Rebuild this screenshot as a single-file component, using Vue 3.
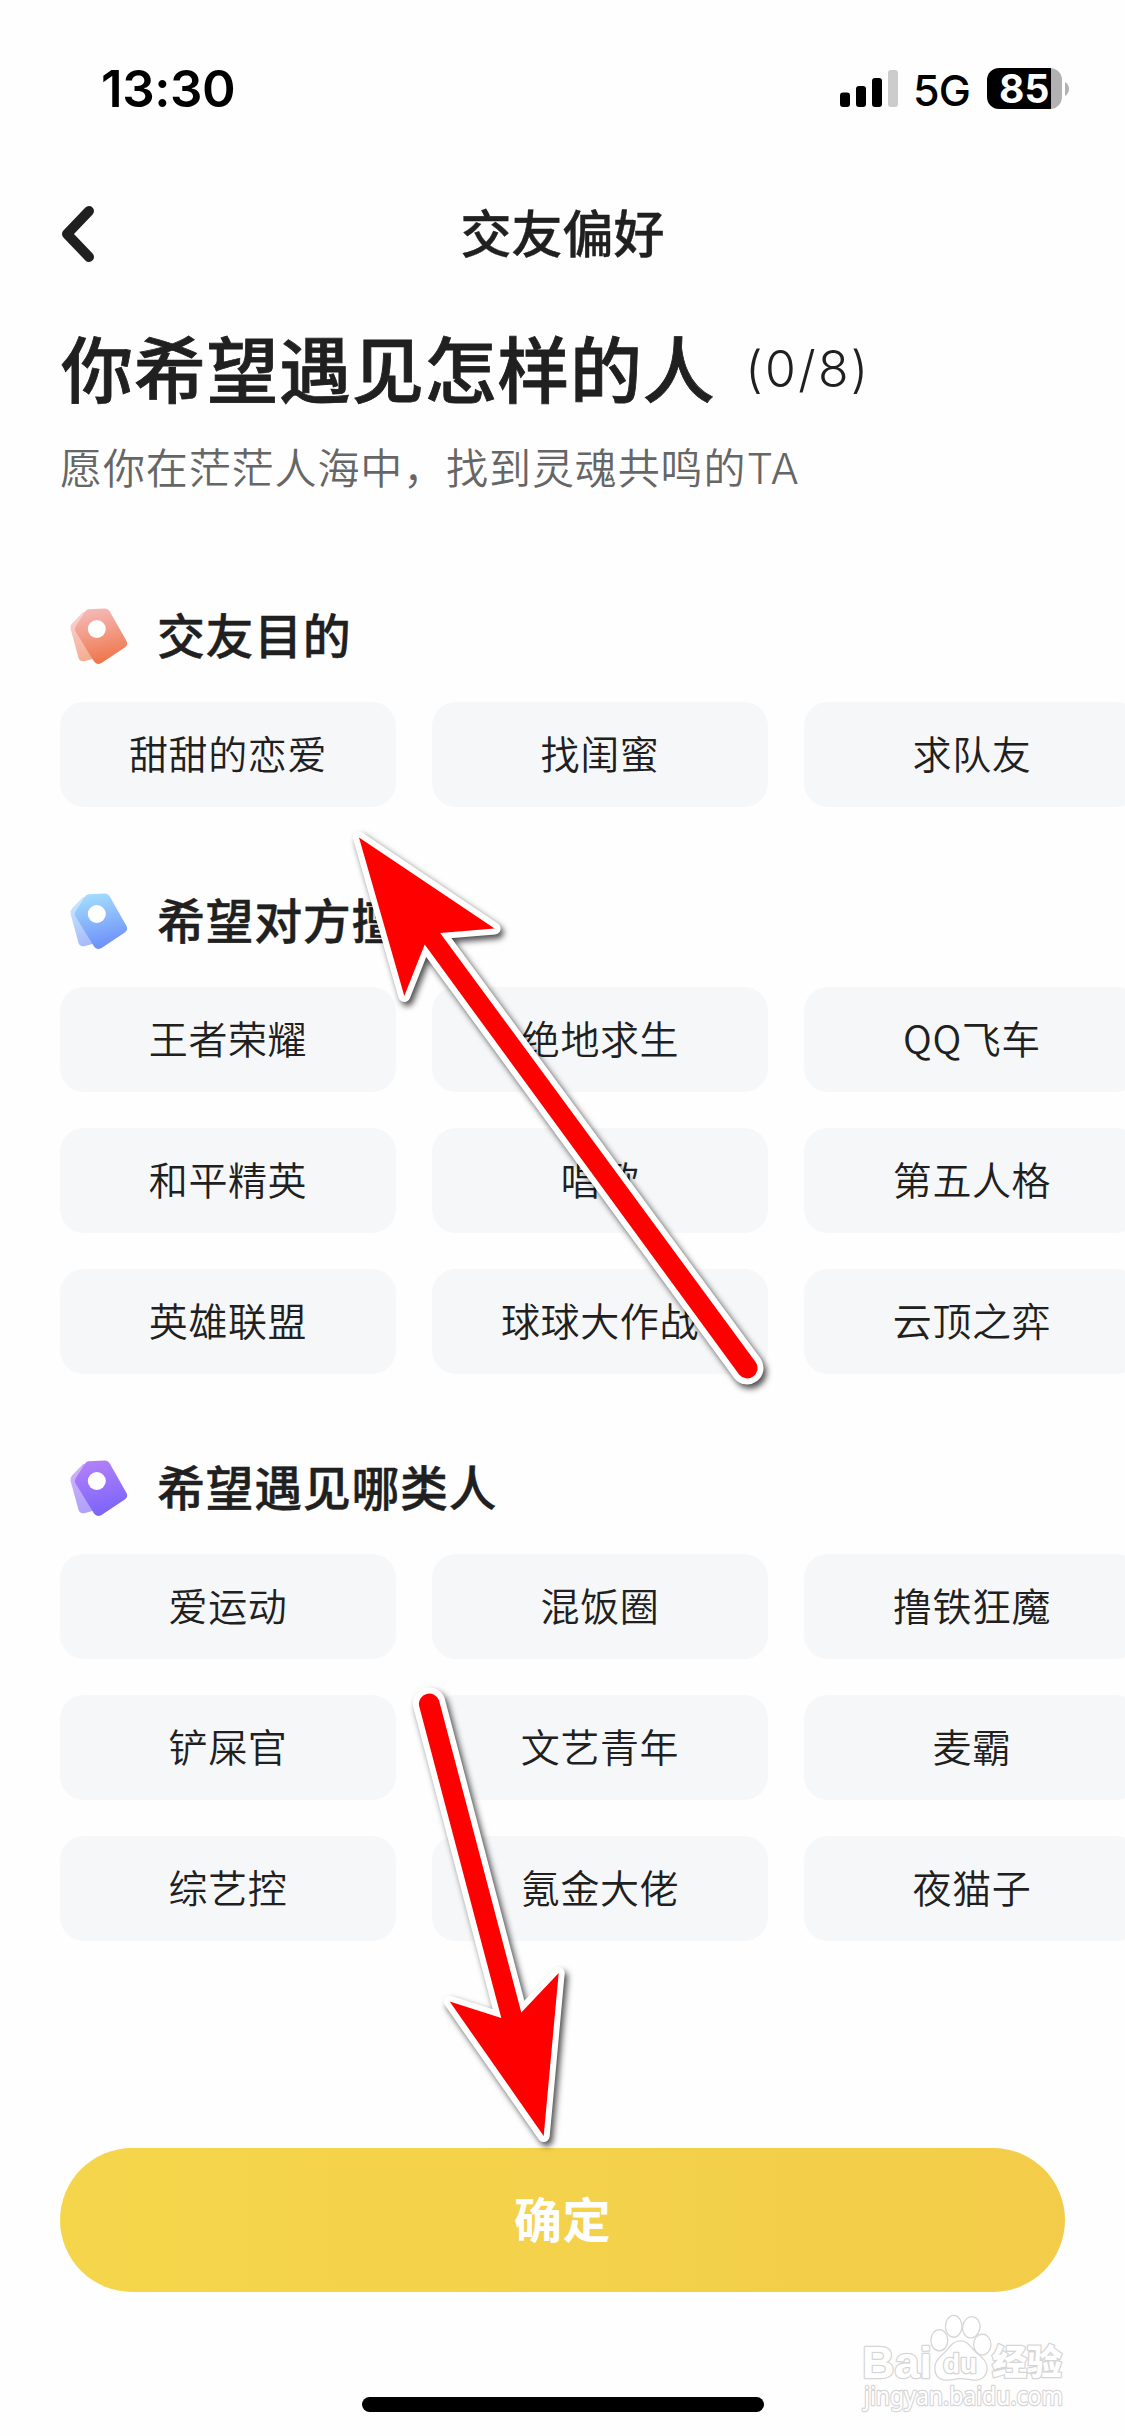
<script setup>
const sections = [
  {
    title: '交友目的',
    from: '#f5b9b8',
    to: '#ee7346',
    rows: [['甜甜的恋爱', '找闺蜜', '求队友']],
  },
  {
    title: '希望对方擅长',
    from: '#a3dcfd',
    to: '#6b8cf9',
    rows: [
      ['王者荣耀', '绝地求生', 'QQ飞车'],
      ['和平精英', '唱歌', '第五人格'],
      ['英雄联盟', '球球大作战', '云顶之弈'],
    ],
  },
  {
    title: '希望遇见哪类人',
    from: '#b180f8',
    to: '#7963fa',
    rows: [
      ['爱运动', '混饭圈', '撸铁狂魔'],
      ['铲屎官', '文艺青年', '麦霸'],
      ['综艺控', '氪金大佬', '夜猫子'],
    ],
  },
]

const arrows = [
  'M359 837.5 L494.6 928.6 L440.1 932.9 L755.9 1362.4 A10.4 10.4 0 0 1 739.1 1374.6 L424.7 944.6 L404.3 996 Z',
  'M543.7 2136 L558.7 1973 L521.3 2012.6 L439 1700.2 A10.4 10.4 0 0 0 419 1705.4 L501.3 2018.1 L449.7 2001.6 Z',
]
</script>

<template>
  <div class="screen">
    <header class="status">
      <span class="time">13:30</span>
      <div class="status-right">
        <svg class="signal" width="58" height="37" viewBox="0 0 58 37">
          <rect x="0" y="22.5" width="10" height="14.5" rx="3" />
          <rect x="16" y="16" width="10" height="21" rx="3" />
          <rect x="32" y="8" width="10" height="29" rx="3" />
          <rect x="48" y="0" width="10" height="37" rx="3" fill="#ccc" />
        </svg>
        <span class="net">5G</span>
        <div class="battery"><span>85</span></div>
        <svg class="nub" width="4" height="14" viewBox="0 0 4 14">
          <path d="M0 0C2.5 1.5 4 4 4 7S2.5 12.5 0 14Z" fill="#b2b2b2" />
        </svg>
      </div>
    </header>

    <nav class="nav">
      <svg class="back" width="34" height="58" viewBox="0 0 34 58">
        <path d="M28 6L6 29L28 52" fill="none" stroke="#202020" stroke-width="10" stroke-linecap="round" stroke-linejoin="round" />
      </svg>
      <h1>交友偏好</h1>
    </nav>

    <div class="intro">
      <div class="question">
        <h2>你希望遇见怎样的人</h2>
        <span class="count">(0/8)</span>
      </div>
      <p>愿你在茫茫人海中，找到灵魂共鸣的<span class="latin">TA</span></p>
    </div>

    <main>
      <section v-for="(s, i) in sections" :key="s.title">
        <div class="head">
          <svg width="64" height="64" viewBox="0 0 64 64">
            <defs>
              <linearGradient :id="'tag' + i" x1="0.4" y1="0" x2="0.6" y2="1">
                <stop offset="0" :stop-color="s.from" />
                <stop offset="1" :stop-color="s.to" />
              </linearGradient>
            </defs>
            <path
              d="M17 8L6 19.5Q3.8 21.8 4.6 25L12.4 53.5Q13.7 58 18.2 57.2L30 54L30 8Z"
              :fill="`url(#tag${i})`"
              opacity="0.6"
            />
            <path
              d="M22.6 5.2L39 4.5Q42 4.4 43.5 7L60.4 36.7Q62.6 40.8 58.8 43.4L35.5 58.9Q31 61.7 28 57.6L9.6 27.6Q8 24.5 10.2 21.4L18.6 8.2Q20.2 5.4 22.6 5.2Z"
              :fill="`url(#tag${i})`"
            />
            <circle cx="30.8" cy="25" r="9" fill="#fff" />
          </svg>
          <h3>{{ s.title }}</h3>
        </div>
        <div v-for="(row, r) in s.rows" :key="r" class="row">
          <button v-for="label in row" :key="label" class="chip">{{ label }}</button>
        </div>
      </section>
    </main>

    <button class="confirm">确定</button>
    <div class="home"></div>

    <svg class="overlay" width="1125" height="2436" viewBox="0 0 1125 2436">
      <g class="mark">
        <text x="862" y="2378" font-size="45" font-weight="700" textLength="70" lengthAdjust="spacingAndGlyphs">Bai</text>
        <ellipse cx="939.3" cy="2340.3" rx="7.8" ry="10" />
        <ellipse cx="953.7" cy="2326.3" rx="7.6" ry="10.3" />
        <ellipse cx="971.3" cy="2327.3" rx="8" ry="10" transform="rotate(10 971.3 2327.3)" />
        <ellipse cx="982.3" cy="2344.5" rx="8" ry="9.8" />
        <path d="M960.5 2341.5C968 2341.5 971 2349 977 2354C983 2358.500 987 2363 986.500 2369C986 2376 981 2380 974 2379.500C969 2379 965 2378 960.500 2378C955 2378 951 2380 946 2379.500C939 2379 935.500 2375 935.500 2368C935.500 2361 940 2358 945 2353C950 2348 953 2341.500 960.500 2341.500Z" />
        <text x="943" y="2373" font-size="28" font-weight="700" textLength="34" lengthAdjust="spacingAndGlyphs">du</text>
        <text class="cn" x="992" y="2375" font-size="35" font-weight="900" textLength="70">经验</text>
        <text class="url" x="864" y="2405" font-size="26" textLength="199" lengthAdjust="spacingAndGlyphs">jingyan.baidu.com</text>
      </g>
      <g v-for="d in arrows" :key="d" class="arrow">
        <path :d="d" fill="#f00" stroke="#fff" stroke-width="12" stroke-linejoin="round" paint-order="stroke" />
      </g>
    </svg>
  </div>
</template>

<style>
body {
  margin: 0;
  background: #fefefe;
}
</style>

<style scoped>
.screen {
  position: relative;
  width: 1125px;
  height: 2436px;
  overflow: hidden;
  display: flex;
  flex-direction: column;
  background: #fefefe;
  color: #202020;
  font-family: "Noto Sans CJK SC", sans-serif;
}
h1, h2, h3, p {
  margin: 0;
}
button {
  border: 0;
  padding: 0;
  margin: 0;
  font: inherit;
  color: inherit;
}
.status {
  height: 132px;
  flex: none;
  display: flex;
  justify-content: space-between;
  box-sizing: border-box;
  padding: 68px 56px 0 101px;
  color: #000;
  font-family: Inter, sans-serif;
}
.time {
  font-size: 51px;
  font-weight: 600;
  line-height: 42px;
  letter-spacing: -0.4px;
}
.status-right {
  display: flex;
  height: 41px;
  align-items: center;
}
.signal {
  margin-right: 15px;
}
.net {
  width: 55px;
  margin-right: 19px;
  font-size: 43px;
  font-weight: 450;
  line-height: 41px;
  letter-spacing: -0.8px;
  white-space: nowrap;
  padding-top: 4px;
}
.battery {
  width: 75px;
  height: 41px;
  border-radius: 12px;
  background: linear-gradient(90deg, #000 64px, #b2b2b2 64px);
  color: #fff;
  font-size: 39px;
  font-weight: 700;
  line-height: 41px;
  box-sizing: border-box;
  padding-left: 12px;
}
.nub {
  margin-left: 3px;
}
.nav {
  height: 204px;
  flex: none;
  position: relative;
  display: flex;
  align-items: flex-start;
  justify-content: center;
}
.back {
  position: absolute;
  left: 61px;
  top: 73px;
}
h1 {
  margin-top: 62px;
  font-size: 51px;
  font-weight: 500;
  line-height: 74px;
  -webkit-text-stroke: 0.4px #202020;
}
.intro {
  height: 264px;
  flex: none;
  padding-left: 60px;
}
.question {
  display: flex;
  height: 72px;
  align-items: center;
}
h2 {
  margin: -12px 0 0 1px;
  font-size: 72px;
  font-weight: 500;
  line-height: 72px;
  letter-spacing: 0.7px;
  white-space: nowrap;
  -webkit-text-stroke: 0.8px #202020;
}
.count {
  margin: -6px 0 0 30px;
  font-family: Inter, sans-serif;
  font-size: 50px;
  font-weight: 300;
  line-height: 72px;
  letter-spacing: 2.3px;
}
.intro p {
  margin-top: 28px;
  font-size: 42px;
  font-weight: 350;
  line-height: 60px;
  letter-spacing: 0.9px;
  color: #666;
  white-space: nowrap;
}
.latin {
  font-family: Inter, sans-serif;
  font-weight: 300;
  letter-spacing: 1px;
  line-height: 1;
}
main {
  flex: none;
}
section {
  padding-left: 60px;
  margin-bottom: 78px;
}
.head {
  display: flex;
  align-items: center;
  height: 72px;
  padding-left: 6px;
  margin-bottom: 30px;
}
.head svg {
  margin-right: 27px;
}
h3 {
  font-size: 48px;
  font-weight: 500;
  line-height: 72px;
  letter-spacing: 0.6px;
  white-space: nowrap;
  margin-top: -6px;
  -webkit-text-stroke: 0.4px #202020;
}
.row {
  display: flex;
  gap: 36px;
  margin-bottom: 36px;
  width: 1080px;
}
.chip {
  flex: none;
  width: 336px;
  height: 105px;
  border-radius: 24px;
  background: #f6f7f9;
  font-size: 39px;
  font-weight: 350;
  letter-spacing: 0.6px;
  line-height: 100px;
  padding-bottom: 5px;
}
.confirm {
  flex: none;
  align-self: center;
  width: 1005px;
  height: 144px;
  margin-top: 129px;
  border-radius: 72px;
  background: linear-gradient(90deg, #f5d64b, #f3cd49);
  color: #fff;
  font-size: 48px;
  font-weight: 700;
  letter-spacing: 0.6px;
  line-height: 138px;
  padding-bottom: 6px;
}
.home {
  flex: none;
  align-self: center;
  width: 402px;
  height: 15px;
  margin-top: 105px;
  border-radius: 8px;
  background: #000;
}
.overlay {
  position: absolute;
  left: 0;
  top: 0;
  pointer-events: none;
}
.arrow {
  filter: drop-shadow(3px 4px 3px rgba(0, 0, 0, 0.7));
}
.mark {
  fill: #fff;
  stroke: #d6d6d6;
  stroke-width: 2.6px;
  paint-order: stroke;
  stroke-linejoin: round;
  font-family: "Liberation Sans", sans-serif;
}
.mark .cn {
  font-family: "Noto Sans CJK SC", sans-serif;
}
.mark .url {
  font-family: "Noto Sans", sans-serif;
}
</style>
